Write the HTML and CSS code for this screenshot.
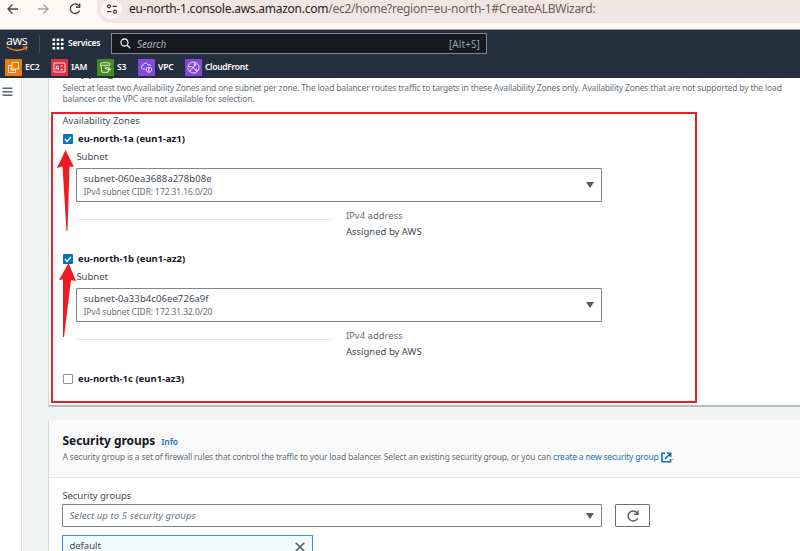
FILE: index.html
```html
<!DOCTYPE html>
<html lang="en">
<head>
<meta charset="utf-8">
<title>Create Application Load Balancer</title>
<link rel="stylesheet" href="styles.css">
</head>
<body>
<div class="browser">
  <div class="browser-nav">
    <svg width="92" height="18" viewBox="0 0 92 18" fill="none" stroke-width="1.4">
      <path d="M18 9H8M12.5 4.5 8 9l4.500 4.500" stroke="#504440"/>
      <path d="M38 9h10M43.500 4.500 48 9l-4.500 4.500" stroke="#aaa19e"/>
      <path d="M79 5.800A4.800 4.800 0 1 0 79.600 10.500M79.700 3.500v3.700H76" stroke="#504440"/>
    </svg>
  </div>
  <div class="url-bar">
    <div class="site-info">
      <svg width="14" height="14" viewBox="0 0 14 14" fill="none" stroke="#453936" stroke-width="1.300"><circle cx="4" cy="4.300" r="1.500"/><path d="M7.500 4.300H12M2 9.700h4.500"/><circle cx="10" cy="9.700" r="1.500"/></svg>
    </div>
    <div class="url"><b>eu-north-1.console.aws.amazon.com</b>/ec2/home?region=eu-north-1#CreateALBWizard:</div>
  </div>
</div>
<header class="console">
  <div class="console-top">
    <div class="logo"><span>aws</span>
      <svg width="22" height="6" viewBox="0 0 22 6" fill="none" stroke="#f79a20" stroke-width="1.200"><path d="M.5.800Q10 7 19 2.200M17 1l4-.2-1.300 3.400"/></svg>
    </div>
    <div class="services">
      <svg width="12" height="12" viewBox="0 0 12 12" fill="#fff"><path d="M.5.500h2.600v2.600H.5zM4.700.500h2.600v2.600H4.700zM8.900.500h2.600v2.600H8.900zM.5 4.700h2.600v2.600H.5zM4.700 4.700h2.600v2.600H4.700zM8.900 4.700h2.600v2.600H8.900zM.5 8.900h2.600v2.600H.5zM4.700 8.900h2.600v2.600H4.700zM8.900 8.900h2.600v2.600H8.900z"/></svg>
      <span>Services</span>
    </div>
    <div class="search">
      <svg width="11" height="11" viewBox="0 0 11 11" fill="none" stroke="#e8eaea" stroke-width="1.300"><circle cx="4.500" cy="4.500" r="3.500"/><path d="m7 7 3.200 3.200"/></svg>
      <span class="search-text">Search</span><span class="shortcut">[Alt+S]</span>
    </div>
  </div>
  <nav class="favorites">
    <div class="fav ec2"><svg viewBox="0 0 17 17"><rect width="17" height="17" fill="#ed7b0c"/><path d="M7 3.500h6.500V10H7zM7 6.500H3.500v7h7V10M6 8.500v2.700h3"/></svg><span>EC2</span></div>
    <div class="fav iam"><svg viewBox="0 0 17 17"><rect width="17" height="17" fill="#dd2f42"/><path d="M3 4h11v9H3zM4.800 11l.8-4h1.200l.8 4M5.300 9.500h1.900M9.500 7H12M9.500 10.500H12"/></svg><span>IAM</span></div>
    <div class="fav s3"><svg viewBox="0 0 17 17"><rect width="17" height="17" fill="#438a20"/><path d="M3.500 4.500v1l1.500 7.800h6l1-4.800M3.500 4.500c1.500-1.200 8-1.200 9.500 0v1.800H4M7.500 9l4.500 2h1.500L13 9.500 8 8"/></svg><span>S3</span></div>
    <div class="fav vpc"><svg viewBox="0 0 17 17"><rect width="17" height="17" fill="#8449d8"/><path d="M7 10H4.500C2.700 9.500 3 7 4.500 7 4.800 4.200 8.500 2.800 10.200 6 12 5.300 12.500 6 12.800 7M10.800 8.200l2.700 1v2.500l-2.700 2-2.600-2V9.200zM10.800 8.200v5"/></svg><span>VPC</span></div>
    <div class="fav cf"><svg viewBox="0 0 17 17"><rect width="17" height="17" fill="#8449d8"/><circle cx="8.500" cy="8.500" r="5.500"/><path d="M3.500 7.500q3-.2 5 1.200l3 3M8.500 8.500l1.500-3M9.800 3.200v2M5 12.500q.5-2.500 3.500-4"/><circle cx="10" cy="5.800" r=".9"/><circle cx="11.500" cy="11.300" r=".9"/></svg><span>CloudFront</span></div>
  </nav>
</header>
<div class="workspace">
  <aside><svg width="11" height="10" viewBox="0 0 11 10" stroke="#5c6670" stroke-width="1.600"><path d="M.5 1.300h10M.5 4.800h10M.5 8.300h10"/></svg></aside>
  <main>
    <section class="card mapping">
      <div class="clipped"><span>Mapping</span></div>
      <div class="desc"><p class="d1">Select at least two Availability Zones and one subnet per zone. The load balancer routes traffic to targets in these Availability Zones only. Availability Zones that are not supported by the load</p><p class="d2">balancer or the VPC are not available for selection.</p></div>
      <div class="zones">
        <div class="zones-label">Availability Zones</div>
        <div class="zone">
          <div class="check-row"><i class="box on"><svg viewBox="0 0 9 9"><path d="m1.700 4.600 2 2 3.600-4.200"/></svg></i><b>eu-north-1a (eun1-az1)</b></div>
          <div class="zone-body">
            <div class="sub-label">Subnet</div>
            <div class="select subnet"><div><div class="s-name">subnet-060ea3688a278b08e</div><div class="s-cidr">IPv4 subnet CIDR: 172.31.16.0/20</div></div><i class="caret"></i></div>
            <div class="detail"><div class="rule"></div><div class="ip"><div class="ip-label">IPv4 address</div><div class="ip-value">Assigned by AWS</div></div></div>
          </div>
          <svg class="arrow" width="20" height="82" viewBox="0 0 20 82"><path d="M8.500 0 17 17l-4.500-.5L10.500 81h-1L5.500 16.500 0 18z"/></svg>
        </div>
        <div class="zone">
          <div class="check-row"><i class="box on"><svg viewBox="0 0 9 9"><path d="m1.700 4.600 2 2 3.600-4.200"/></svg></i><b>eu-north-1b (eun1-az2)</b></div>
          <div class="zone-body">
            <div class="sub-label">Subnet</div>
            <div class="select subnet"><div><div class="s-name">subnet-0a33b4c06ee726a9f</div><div class="s-cidr">IPv4 subnet CIDR: 172.31.32.0/20</div></div><i class="caret"></i></div>
            <div class="detail"><div class="rule"></div><div class="ip"><div class="ip-label">IPv4 address</div><div class="ip-value">Assigned by AWS</div></div></div>
          </div>
          <svg class="arrow second" width="20" height="76" viewBox="0 0 20 76"><path d="M9.500 0 17 18l-5-1L5 74H4V16.500L0 17z"/></svg>
        </div>
        <div class="check-row"><i class="box"></i><b>eu-north-1c (eun1-az3)</b></div>
      </div>
    </section>
    <section class="card security">
      <div class="card-head">
        <div class="title"><h2>Security groups</h2><a>Info</a></div>
        <p class="sg-desc"><span class="sg1">A security group is a set of firewall rules that control the traffic to your load balancer. Select an existing security group, or you can </span><a>create a new security group</a><svg width="11" height="11" viewBox="0 0 11 11" fill="none" stroke="#0873bb" stroke-width="1.600"><path d="M4 1.300H1v8.400h8.500V7M6 1.300h3.700V5M9.500 1.500 4 7"/></svg><span>.</span></p>
      </div>
      <div class="sg-body">
        <div class="sg-label">Security groups</div>
        <div class="sg-row"><div class="select sg-select"><em>Select up to 5 security groups</em><i class="caret"></i></div>
          <div class="refresh"><svg width="14" height="14" viewBox="0 0 14 14" fill="none" stroke="#545b64" stroke-width="1.400"><path d="M11.600 9.200A5 5 0 1 1 11.300 4.300M12 1.500v3.700H8"/></svg></div></div>
        <div class="token"><span>default</span><svg width="10" height="10" viewBox="0 0 10 10" stroke="#545b64" stroke-width="1.500"><path d="m.7.700 8.600 8.600M9.300.700.700 9.300"/></svg></div>
      </div>
    </section>
  </main>
</div>
</body>
</html>
```
FILE: styles.css
```css
* { box-sizing: border-box; }
body { margin: 0; width: 800px; height: 551px; overflow: hidden; background: #fff; color: #454b52; font: 9.5px/14px "Noto Sans", sans-serif; white-space: nowrap; }
p, h2 { margin: 0; }
i { font-style: normal; }
svg { display: block; flex: none; }

.browser { height: 29px; display: flex; background: #fff8f4; }
.browser-nav { width: 97px; flex: none; }
.url-bar { flex: 1; height: 23px; display: flex; background: #f2e6e3; border-bottom-left-radius: 14px; }
.site-info { width: 21px; height: 20px; margin: -1px 7px 0 4px; border-radius: 50%; background: #fff8f4; display: flex; align-items: center; justify-content: center; }
.url { font-size: 12px; line-height: 18px; letter-spacing: -.25px; color: #6b5d59; }
.url b { font-weight: 400; color: #2b201e; }

.console { height: 49px; background: #232f3e; border-top: 1px solid #9b9a8c; color: #fff; font-weight: 600; font-size: 8.5px; letter-spacing: -.18px; }
.console-top { height: 27px; padding: 3px 0 0 6px; display: flex; }
.logo { width: 34px; height: 18px; border-right: 1px solid #414d5c; margin-top: 2px; letter-spacing: -.4px; }
.logo span { display: block; font: 500 12.5px/11px "Open Sans", sans-serif; height: 11px; }
.services { display: flex; align-items: center; gap: 4px; width: 71px; padding-left: 12px; height: 19px; }
.services svg { margin-top: 2px; }
.search { width: 376px; height: 21px; border: 1px solid #7d8998; background: #161a20; display: flex; align-items: center; padding: 0 6px 0 8px; font-size: 10px; font-weight: 400; color: #a7b0b8; }
.search-text { margin-left: 6px; font-style: italic; letter-spacing: -.1px; }
.shortcut { margin-left: auto; font-size: 10px; color: #8ba1a7; letter-spacing: .1px; }
.favorites { height: 21px; display: flex; padding: 2px 0 0 5px; }
.fav { display: flex; height: 17px; align-items: center; gap: 3px; }
.fav span { margin-top: -2px; }
.fav svg { width: 17px; height: 17px; fill: none; stroke: #fff; stroke-width: .8; }
.fav rect { stroke: none; }
.ec2, .iam { width: 46px; }
.s3 { width: 41px; }
.vpc { width: 47px; }
.cf { letter-spacing: -.3px; }

.workspace { height: 473px; display: flex; }
aside { width: 22px; padding: 9px 0 0 2px; border-right: 1px solid #dfe3e3; }
main { flex: 1; min-width: 0; background: #f1f3f3; padding-left: 26px; overflow: hidden; }
.card { background: #fff; border-left: 1px solid #d5dbdb; }
.mapping { height: 329px; border-bottom: 2px solid #b6bcbf; }
.clipped { height: 4px; overflow: hidden; padding-left: 13px; font-size: 12px; line-height: 14px; font-weight: 700; color: #545b64; }
.clipped span { display: block; margin-top: -13px; }
.desc { height: 30px; padding-left: 13.5px; font-size: 8.5px; line-height: 11px; letter-spacing: -.17px; color: #687078; }
.zones { width: 646px; height: 291px; margin-left: 2px; border: 2px solid #e9202a; padding-left: 9.5px; }
.zones-label { height: 17px; line-height: 14px; }
.zone { height: 120px; position: relative; }
.check-row { height: 16px; display: flex; align-items: center; gap: 5.5px; color: #16191f; }
.check-row b { font-size: 9.5px; }
.box { width: 10px; height: 10px; border: 1px solid #879596; border-radius: 1px; }
.box.on { background: #0073bb; border: 0; }
.box svg { width: 10px; height: 10px; fill: none; stroke: #fff; stroke-width: 1.300; }
.zone-body { padding-left: 13.9px; }
.sub-label { height: 21px; line-height: 20px; }
.select { border: 1px solid #7d868e; border-radius: 1px; display: flex; justify-content: space-between; align-items: center; padding: 0 7px 0 6px; background: #fff; }
.subnet { width: 525.5px; height: 34px; }
.s-name { line-height: 14px; letter-spacing: .08px; }
.s-cidr { font-size: 8.5px; line-height: 12px; letter-spacing: -.1px; color: #687078; }
.caret { border: 4px solid transparent; border-top: 6px solid #545b64; border-bottom: 0; }
.detail { display: flex; gap: 13.5px; padding-top: 7px; }
.rule { width: 256px; height: 11px; border-bottom: 1px solid #e5e8e8; }
.ip-label { line-height: 14px; color: #687078; }
.ip-value { line-height: 18px; }
.arrow { position: absolute; left: -6px; top: 19px; fill: #ed1c24; }
.arrow.second { left: -4px; top: 12px; }

.security { margin-top: 13px; height: 200px; }
.card-head { height: 58px; padding: 12px 0 0 13.5px; background: #fafafa; border-bottom: 1px solid #e5e8e8; }
.title { display: flex; align-items: baseline; gap: 6px; height: 18px; line-height: 17px; }
h2 { font-size: 12px; letter-spacing: -.05px; color: #16191f; }
a { color: #2272b8; }
.title a { font-size: 8.5px; font-weight: 600; letter-spacing: -.1px; }
.sg-desc { display: flex; align-items: center; font-size: 8.5px; line-height: 14px; letter-spacing: -.185px; color: #687078; }
.sg-desc svg { margin-left: 2px; }
.sg1 { white-space: pre; }
.sg-body { padding: 11px 0 0 13.4px; }
.sg-label { line-height: 14px; height: 15px; letter-spacing: -.05px; }
.sg-row { display: flex; gap: 13.5px; }
.sg-select { width: 539.5px; height: 23px; color: #687078; letter-spacing: .1px; }
.refresh { width: 35px; height: 23px; border: 1px solid #687078; border-radius: 1px; display: flex; align-items: center; justify-content: center; }
.token { width: 250.5px; height: 24px; margin-top: 8px; border: 1px solid #4193c7; background: #f1faff; padding: 0 7px 3px 6px; display: flex; align-items: center; justify-content: space-between; }
.token svg { margin-top: 2px; }
```
